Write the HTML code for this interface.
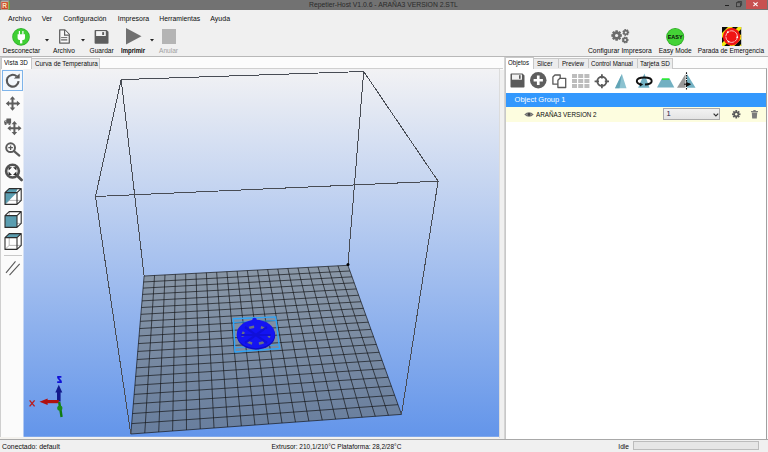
<!DOCTYPE html>
<html><head><meta charset="utf-8">
<style>
html,body{margin:0;padding:0;}
body{width:768px;height:452px;position:relative;overflow:hidden;background:#f0f0f0;font-family:"Liberation Sans",sans-serif;color:#0c0c0c;}
.a{position:absolute;white-space:nowrap;line-height:1;}
.t7{font-size:7px;}
svg{position:absolute;overflow:visible;}
</style></head><body>
<!-- title bar -->
<div class="a" style="left:0;top:0;width:768px;height:10.4px;background:#727272;"></div>
<div class="a" style="left:309px;top:2px;font-size:6.8px;color:#2a2a2a;">Repetier-Host V1.0.6 - ARAÑA3 VERSION 2.STL</div>
<svg style="left:0;top:0" width="12" height="11">
 <rect x="1.5" y="0.6" width="7.5" height="1" fill="#b8b8c0"/>
 <rect x="8.2" y="1.4" width="1.8" height="8.2" fill="#6a9a3a"/>
 <rect x="0.8" y="1.6" width="7.6" height="8" fill="#e0c8b0"/>
 <rect x="1.3" y="2.1" width="6.6" height="7" fill="#cc4828"/>
 <text x="2.3" y="8.2" font-size="6.6" font-weight="bold" fill="#f8e4c0" font-family="Liberation Sans">R</text>
</svg>
<div class="a" style="left:725px;top:5px;width:4px;height:1px;background:#222;"></div>
<svg style="left:736px;top:1.3px" width="7" height="6"><path d="M1.8,1.6 V0.5 H5.6 V4.3 H4.6" fill="none" stroke="#333" stroke-width="0.8"/><rect x="0.5" y="1.7" width="4" height="4" fill="none" stroke="#333" stroke-width="0.8"/></svg>
<div class="a" style="left:745.5px;top:0;width:21.5px;height:8.8px;background:#c75050;"></div>
<svg style="left:753.3px;top:1.6px" width="6" height="5"><path d="M0.4,0.4 L4.6,4.2 M4.6,0.4 L0.4,4.2" stroke="#fff" stroke-width="1.1"/></svg>

<!-- menu -->
<div class="a t7" style="left:8px;top:15px;">Archivo</div>
<div class="a t7" style="left:41.7px;top:15px;">Ver</div>
<div class="a t7" style="left:63.3px;top:15px;">Configuración</div>
<div class="a t7" style="left:117.7px;top:15px;">Impresora</div>
<div class="a" style="left:159.3px;top:15.5px;font-size:6.8px;">Herramientas</div>
<div class="a t7" style="left:210.3px;top:15px;">Ayuda</div>

<!-- toolbar -->
<svg style="left:12px;top:27.5px" width="18" height="18" viewBox="0 0 18 18">
 <circle cx="9" cy="8.9" r="8.8" fill="#2eb02a"/>
 <circle cx="9" cy="8.9" r="8" fill="#3fcf34"/>
 <path d="M7.4,3 V6.8 M10.9,3 V6.8" stroke="#fff" stroke-width="1.2"/>
 <path d="M5.6,6.3 H13 V10 Q13,11.8 11.2,12 H7.4 Q5.6,11.8 5.6,10z" fill="#fff"/>
 <rect x="8" y="11.5" width="2.3" height="3.9" fill="#fff"/>
</svg>
<div class="a" style="left:2.7px;top:47.6px;font-size:6.7px;">Desconectar</div>
<svg style="left:44.8px;top:39px" width="4" height="3"><path d="M0,0h4l-2,2.5z" fill="#222"/></svg>
<svg style="left:58px;top:28px" width="13" height="17" viewBox="0 0 13 17">
 <path d="M1.7,1.9 H6.9 L11.3,6.4 V15.1 H1.7z" fill="#f8f8f8" stroke="#626262" stroke-width="1.3" stroke-linejoin="round"/>
 <path d="M6.6,1.9 V7.2 H11.3" fill="#fff" stroke="#626262" stroke-width="1.2"/>
 <path d="M3.1,9.5 H9.3" stroke="#5a5a5a" stroke-width="0.8"/>
 <rect x="3.1" y="10.9" width="6.2" height="1.8" fill="#8a8a8a"/>
</svg>
<div class="a" style="left:53px;top:47.6px;font-size:6.6px;">Archivo</div>
<svg style="left:80.7px;top:39px" width="4" height="3"><path d="M0,0h4l-2,2.5z" fill="#222"/></svg>
<svg style="left:94px;top:29px" width="16" height="16" viewBox="0 0 16 16">
 <path d="M0.6,1.8 Q0.6,0.9 1.5,0.9 H12.6 L14.5,2.8 V14 Q14.5,14.8 13.7,14.8 H1.4 Q0.6,14.8 0.6,14z" fill="#5e5e5e"/>
 <rect x="2.1" y="2.1" width="9.7" height="4.9" fill="#f4f4f4"/>
 <rect x="8.2" y="3.1" width="1.9" height="2.9" fill="#5e5e5e"/>
</svg>
<div class="a" style="left:89.5px;top:47.6px;font-size:6.6px;">Guardar</div>
<svg style="left:125.5px;top:28px" width="16" height="17"><path d="M0,0 L15.5,8.2 L0,16.5z" fill="#707070"/></svg>
<div class="a" style="left:121px;top:47.6px;font-size:6.6px;font-weight:bold;transform:scaleX(0.91);transform-origin:0 0;">Imprimir</div>
<svg style="left:150.2px;top:39px" width="4" height="3"><path d="M0,0h4l-2,2.5z" fill="#222"/></svg>
<div class="a" style="left:161.5px;top:29.3px;width:14.6px;height:14.6px;background:#b4b4b4;"></div>
<div class="a" style="left:159px;top:47.6px;font-size:6.6px;color:#a0a0a0;">Anular</div>

<!-- right toolbar -->
<svg style="left:609px;top:28px" width="22" height="17" viewBox="0 0 22 17"><polygon points="11.23,6.08 12.87,6.34 12.87,8.66 11.23,8.92 11.17,9.06 12.15,10.41 10.51,12.05 9.16,11.07 9.02,11.13 8.76,12.77 6.44,12.77 6.18,11.13 6.04,11.07 4.69,12.05 3.05,10.41 4.03,9.06 3.97,8.92 2.33,8.66 2.33,6.34 3.97,6.08 4.03,5.94 3.05,4.59 4.69,2.95 6.04,3.93 6.18,3.87 6.44,2.23 8.76,2.23 9.02,3.87 9.16,3.93 10.51,2.95 12.15,4.59 11.17,5.94" fill="#6c6c6c"/><circle cx="7.6" cy="7.5" r="1.6" fill="#f0f0f0"/><polygon points="19.08,3.37 20.19,3.54 20.19,5.26 19.08,5.43 19.03,5.53 19.58,6.52 18.25,7.59 17.41,6.82 17.30,6.85 16.88,7.90 15.21,7.52 15.29,6.39 15.20,6.32 14.11,6.64 13.37,5.10 14.30,4.46 14.30,4.34 13.37,3.70 14.11,2.16 15.20,2.48 15.29,2.41 15.21,1.28 16.88,0.90 17.30,1.95 17.41,1.98 18.25,1.21 19.58,2.28 19.03,3.27" fill="#6c6c6c"/><circle cx="16.8" cy="4.4" r="1.0" fill="#f0f0f0"/><polygon points="18.48,10.97 19.59,11.14 19.59,12.86 18.48,13.03 18.43,13.13 18.98,14.12 17.65,15.19 16.81,14.42 16.70,14.45 16.28,15.50 14.61,15.12 14.69,13.99 14.60,13.92 13.51,14.24 12.77,12.70 13.70,12.06 13.70,11.94 12.77,11.30 13.51,9.76 14.60,10.08 14.69,10.01 14.61,8.88 16.28,8.50 16.70,9.55 16.81,9.58 17.65,8.81 18.98,9.88 18.43,10.87" fill="#6c6c6c"/><circle cx="16.2" cy="12" r="1.0" fill="#f0f0f0"/></svg>
<div class="a" style="left:588px;top:47.6px;font-size:6.75px;">Configurar Impresora</div>
<svg style="left:666px;top:27.5px" width="19" height="18" viewBox="0 0 19 18">
 <ellipse cx="9.2" cy="9" rx="9" ry="8.9" fill="#28a820"/>
 <ellipse cx="9.2" cy="9" rx="8.3" ry="8.2" fill="#44d236"/>
 <text x="9.2" y="11.3" text-anchor="middle" font-size="6.2" font-weight="bold" fill="#0a0a0a" font-family="Liberation Sans" textLength="15" lengthAdjust="spacingAndGlyphs">EASY</text>
</svg>
<div class="a" style="left:658.7px;top:47.6px;font-size:6.6px;">Easy Mode</div>
<svg style="left:721.8px;top:26.9px" width="19.2" height="19" viewBox="0 0 19.2 19">
 <rect x="0" y="0" width="19.2" height="19" fill="#0a0a0a"/>
 <path d="M0,6 L6,0 H11 L0,11z M0,16 L16,0 H19.2 V2 L2.2,19 H0z M19.2,7 V12 L12.2,19 H7.2z M19.2,17 V19 H17.2z" fill="#f2ea10"/>
 <circle cx="9.6" cy="9.6" r="8.8" fill="#f01414"/>
 <circle cx="9.6" cy="9.6" r="5.8" fill="none" stroke="#ffe0e0" stroke-width="0.8" stroke-dasharray="5.5,0.6"/>
 <circle cx="5.8" cy="5.2" r="0.9" fill="#fff"/><circle cx="15.3" cy="10.2" r="0.9" fill="#fff"/><circle cx="6.5" cy="14.6" r="0.9" fill="#fff"/>
</svg>
<div class="a" style="left:697.7px;top:47.6px;font-size:6.5px;">Parada de Emergencia</div>

<!-- separator line below toolbar -->
<div class="a" style="left:0;top:56.5px;width:768px;height:13px;background:#fcfcfc;"></div>
<div class="a" style="left:0;top:55.8px;width:768px;height:1px;background:#b8b8b8;"></div>

<!-- left tabs -->
<div class="a" style="left:0;top:68px;width:503px;height:1px;background:#d0d0d0;"></div>
<div class="a" style="left:1px;top:56.5px;width:31px;height:12px;background:#fff;border:1px solid #c8c8c8;border-bottom:none;box-sizing:border-box;"></div>
<div class="a" style="left:4.3px;top:59.3px;font-size:7.2px;transform:scaleX(0.88);transform-origin:0 0;">Vista 3D</div>
<div class="a" style="left:32.3px;top:58px;width:68px;height:10.5px;background:#ececec;border:1px solid #c8c8c8;border-left:none;border-bottom:none;box-sizing:border-box;"></div>
<div class="a" style="left:34.5px;top:59.7px;font-size:7.2px;transform:scaleX(0.88);transform-origin:0 0;">Curva de Temperatura</div>

<!-- left toolbar area -->
<div class="a" style="left:0;top:69px;width:23.5px;height:368px;background:#fbfbfb;"></div>
<div class="a" style="left:0;top:56.5px;width:1px;height:382px;background:#cfcfcf;"></div>
<div class="a" style="left:2.3px;top:70.2px;width:20.5px;height:21.1px;border:1px solid #7eb4ea;box-sizing:border-box;background:#f4f8fc;"></div>
<!-- rotate -->
<svg style="left:0;top:66px" width="24" height="26" viewBox="0 0 24 26">
 <path d="M18.58,15.21 A5.9,5.9 0 1 1 16.6,10.3" fill="none" stroke="#585858" stroke-width="2.1"/>
 <path d="M13.9,12.5 H19.7 V7.6z" fill="#585858"/>
</svg>
<!-- move -->
<svg style="left:0;top:90px" width="24" height="24" viewBox="0 0 24 24">
 <path d="M12.5,9 V18 M8,13.5 H17" stroke="#5e5e5e" stroke-width="2"/>
 <path d="M12.5,6.3 L9.7,9.6 H15.3z M12.5,20.8 L9.7,17.4 H15.3z M5.8,13.5 L9.1,10.7 V16.3z M20.2,13.5 L16.9,10.7 V16.3z" fill="#5e5e5e"/>
</svg>
<!-- move object -->
<svg style="left:0;top:114px" width="24" height="24" viewBox="0 0 24 24">
 <path d="M14.4,9.5 V19 M9.8,14.2 H19.2" stroke="#5e5e5e" stroke-width="2"/>
 <path d="M14.4,7.1 L11.6,10.3 H17.2z M14.4,21.3 L11.6,18.1 H17.2z M7.4,14.2 L10.6,11.4 V17z M21.5,14.2 L18.3,11.4 V17z" fill="#5e5e5e"/>
 <path d="M6.4,4.4 H10.7 Q11.1,4.4 11.1,4.8 V9.4 H6.4z" fill="#5e5e5e"/>
 <path d="M4.2,7.2 L5.2,5.9 H6.6 V9.4 H4.2z" fill="#5e5e5e"/>
 <rect x="4.9" y="6.5" width="1.1" height="1.1" fill="#e8e8e8"/>
 <circle cx="5.6" cy="10" r="1.1" fill="#5e5e5e"/>
 <circle cx="9.4" cy="10" r="1.1" fill="#5e5e5e"/>
</svg>
<!-- zoom -->
<svg style="left:5px;top:142px" width="16" height="15" viewBox="0 0 16 15">
 <circle cx="5.6" cy="5.7" r="4.4" fill="none" stroke="#5a5a5a" stroke-width="2"/>
 <path d="M9,9.2 L14.3,13.6" stroke="#5a5a5a" stroke-width="2.2" stroke-linecap="round"/>
 <path d="M5.6,3.4 V8 M3.3,5.7 H7.9" stroke="#5a5a5a" stroke-width="1.3"/>
</svg>
<!-- zoom fit -->
<svg style="left:3.5px;top:162.6px" width="19" height="19" viewBox="0 0 19 19">
 <circle cx="8.5" cy="8.1" r="6.4" fill="none" stroke="#525252" stroke-width="2.6"/>
 <path d="M13,12.5 L17.6,16.9" stroke="#525252" stroke-width="2.8" stroke-linecap="round"/>
 <path d="M4.6,4.2 H8 L4.6,7.6z M12.4,4.2 H9 L12.4,7.6z M4.6,12 H8 L4.6,8.6z M12.4,12 H9 L12.4,8.6z" fill="#2a2a2a"/>
</svg>
<!-- cubes -->
<svg style="left:3.5px;top:187.5px" width="19" height="18" viewBox="0 0 19 18">
<path d="M1.0,4.6 L5.2,0.5999999999999996 H17.2 V12.399999999999999 L13.0,16.4 H1.0z" fill="#fff"/>
<path d="M5.2,0.5999999999999996 V12.399999999999999 H17.2 M1.0,16.4 L5.2,12.399999999999999" fill="none" stroke="#9a9a9a" stroke-width="0.7"/>
<path d="M1.0,4.6 H13.0 L1.0,16.4z" fill="#5a9db0"/>
<path d="M1.0,4.6 L5.2,0.5999999999999996 H13.7 L12.0,4.6z" fill="#5a9db0"/>
<path d="M1.0,4.6 L5.2,0.5999999999999996 H17.2 V12.399999999999999 L13.0,16.4 H1.0z M1.0,4.6 H13.0 V16.4 M13.0,4.6 L17.2,0.5999999999999996" fill="none" stroke="#2e2e2e" stroke-width="1.1" stroke-linejoin="round"/>
</svg>
<svg style="left:3.5px;top:210.5px" width="19" height="18" viewBox="0 0 19 18">
<path d="M1.0,4.6 L5.2,0.5999999999999996 H17.2 V12.399999999999999 L13.0,16.4 H1.0z" fill="#fff"/>
<path d="M5.2,0.5999999999999996 V12.399999999999999 H17.2 M1.0,16.4 L5.2,12.399999999999999" fill="none" stroke="#9a9a9a" stroke-width="0.7"/>
<rect x="1.0" y="4.6" width="12.0" height="11.799999999999999" fill="#5a9db0"/>
<path d="M1.0,4.6 L5.2,0.5999999999999996 H17.2 V12.399999999999999 L13.0,16.4 H1.0z M1.0,4.6 H13.0 V16.4 M13.0,4.6 L17.2,0.5999999999999996" fill="none" stroke="#2e2e2e" stroke-width="1.1" stroke-linejoin="round"/>
</svg>
<svg style="left:3.5px;top:233px" width="19" height="18" viewBox="0 0 19 18">
<path d="M1.0,4.6 L5.2,0.5999999999999996 H17.2 V12.399999999999999 L13.0,16.4 H1.0z" fill="#fff"/>
<path d="M5.2,0.5999999999999996 V12.399999999999999 H17.2 M1.0,16.4 L5.2,12.399999999999999" fill="none" stroke="#9a9a9a" stroke-width="0.7"/>
<path d="M1.0,4.6 L5.2,0.5999999999999996 H17.2 L13.0,4.6z" fill="#5a9db0"/>
<path d="M1.0,4.6 L5.2,0.5999999999999996 H17.2 V12.399999999999999 L13.0,16.4 H1.0z M1.0,4.6 H13.0 V16.4 M13.0,4.6 L17.2,0.5999999999999996" fill="none" stroke="#2e2e2e" stroke-width="1.1" stroke-linejoin="round"/>
</svg>
<div class="a" style="left:3.5px;top:255px;width:18px;height:1px;background:#c8c8c8;"></div>
<svg style="left:0;top:255px" width="24" height="24"><path d="M6,17.8 L15.5,6.4 M9.5,20.2 L19.7,8.8" stroke="#5a5a5a" stroke-width="1.1"/></svg>

<!-- 3D viewport -->
<svg style="left:0;top:0" width="768" height="452">
 <defs>
  <linearGradient id="bg" gradientUnits="userSpaceOnUse" x1="0" y1="69" x2="0" y2="436.8">
   <stop offset="0" stop-color="#f2f2f4"/>
   <stop offset="1" stop-color="#6395ea"/>
  </linearGradient>
 <linearGradient id="bed" gradientUnits="userSpaceOnUse" x1="0" y1="265" x2="0" y2="434">
   <stop offset="0" stop-color="#8a97a6"/>
   <stop offset="1" stop-color="#687e9e"/>
  </linearGradient>
 </defs>
 <rect x="23.5" y="69" width="475.5" height="367.8" fill="url(#bg)"/>
 <polygon points="144.1,276.0 347.9,265.3 401.5,414.4 130.8,434.0" fill="url(#bed)"/>
 <g stroke="#15171a" stroke-width="0.7">
<line x1="144.10" y1="276.00" x2="130.80" y2="434.00"/>
<line x1="144.10" y1="276.00" x2="347.90" y2="265.30"/>
<line x1="154.55" y1="275.45" x2="144.79" y2="432.99"/>
<line x1="143.60" y1="281.98" x2="349.95" y2="270.99"/>
<line x1="164.97" y1="274.90" x2="158.73" y2="431.98"/>
<line x1="143.08" y1="288.12" x2="352.04" y2="276.83"/>
<line x1="175.36" y1="274.36" x2="172.62" y2="430.97"/>
<line x1="142.55" y1="294.42" x2="354.20" y2="282.81"/>
<line x1="185.72" y1="273.81" x2="186.47" y2="429.97"/>
<line x1="142.01" y1="300.88" x2="356.40" y2="288.95"/>
<line x1="196.06" y1="273.27" x2="200.26" y2="428.97"/>
<line x1="141.45" y1="307.52" x2="358.67" y2="295.25"/>
<line x1="206.37" y1="272.73" x2="214.00" y2="427.98"/>
<line x1="140.87" y1="314.34" x2="360.99" y2="301.72"/>
<line x1="216.65" y1="272.19" x2="227.70" y2="426.98"/>
<line x1="140.28" y1="321.35" x2="363.38" y2="308.36"/>
<line x1="226.90" y1="271.65" x2="241.35" y2="426.00"/>
<line x1="139.68" y1="328.55" x2="365.83" y2="315.18"/>
<line x1="237.13" y1="271.12" x2="254.95" y2="425.01"/>
<line x1="139.05" y1="335.97" x2="368.35" y2="322.19"/>
<line x1="247.33" y1="270.58" x2="268.51" y2="424.03"/>
<line x1="138.41" y1="343.59" x2="370.94" y2="329.40"/>
<line x1="257.51" y1="270.05" x2="282.02" y2="423.05"/>
<line x1="137.75" y1="351.44" x2="373.61" y2="336.81"/>
<line x1="267.66" y1="269.51" x2="295.48" y2="422.08"/>
<line x1="137.07" y1="359.52" x2="376.35" y2="344.44"/>
<line x1="277.78" y1="268.98" x2="308.89" y2="421.11"/>
<line x1="136.37" y1="367.85" x2="379.17" y2="352.29"/>
<line x1="287.87" y1="268.45" x2="322.26" y2="420.14"/>
<line x1="135.65" y1="376.43" x2="382.08" y2="360.37"/>
<line x1="297.94" y1="267.92" x2="335.58" y2="419.17"/>
<line x1="134.90" y1="385.28" x2="385.07" y2="368.70"/>
<line x1="307.99" y1="267.40" x2="348.85" y2="418.21"/>
<line x1="134.13" y1="394.41" x2="388.16" y2="377.28"/>
<line x1="318.00" y1="266.87" x2="362.08" y2="417.25"/>
<line x1="133.34" y1="403.83" x2="391.34" y2="386.13"/>
<line x1="327.99" y1="266.35" x2="375.27" y2="416.30"/>
<line x1="132.52" y1="413.56" x2="394.62" y2="395.25"/>
<line x1="337.96" y1="265.82" x2="388.41" y2="415.35"/>
<line x1="131.67" y1="423.61" x2="398.00" y2="404.67"/>
<line x1="347.90" y1="265.30" x2="401.50" y2="414.40"/>
<line x1="130.80" y1="434.00" x2="401.50" y2="414.40"/>
 </g>
 <g stroke="#484c54" stroke-width="1" fill="none" shape-rendering="crispEdges">
<line x1="121.2" y1="79.6" x2="363.7" y2="71.5"/>
<line x1="363.7" y1="71.5" x2="438.1" y2="181.2"/>
<line x1="438.1" y1="181.2" x2="95.5" y2="196.5"/>
<line x1="95.5" y1="196.5" x2="121.2" y2="79.6"/>
<line x1="121.2" y1="79.6" x2="144.1" y2="276.0"/>
<line x1="363.7" y1="71.5" x2="347.9" y2="265.3"/>
<line x1="95.5" y1="196.5" x2="130.8" y2="434.0"/>
<line x1="438.1" y1="181.2" x2="401.5" y2="414.4"/>
 </g>
 <circle cx="348" cy="264.6" r="1.5" fill="#000"/>
 <!-- object -->
 <g fill="none" stroke="#2ea4f8" stroke-width="1.4">
  <polygon points="233.4,318.8 275.7,316.9 279.6,348.5 234.9,351.9"/>
  <line x1="234" y1="322.5" x2="276" y2="320.5" stroke-width="0.9"/>
  <line x1="235" y1="347.8" x2="279" y2="344.8" stroke-width="0.9"/>
 </g>
 <ellipse cx="256" cy="335.5" rx="19.2" ry="14.2" fill="#0c0cc4"/>
 <ellipse cx="255.8" cy="334" rx="19" ry="14.2" fill="#1414f2"/>
 <circle cx="254.5" cy="320.2" r="2.4" fill="#1414f2"/>
 <ellipse cx="256" cy="335.2" rx="13.2" ry="8.6" fill="none" stroke="#6a7284" stroke-width="2.5" stroke-dasharray="5 6.8" stroke-dashoffset="2.5"/>
 <g stroke="#1010d8" stroke-width="2.2">
  <path d="M245,327 L267,343 M267,327 L245,343 M241,335 H271"/>
 </g>
 <!-- axes -->
 <path d="M58.8,401.5 V391" stroke="#141a8c" stroke-width="3.6"/>
 <path d="M58.8,384.8 L55.3,392.5 H62.3z" fill="#141a8c"/>
 <path d="M57.2,376.8 H61.4 M57.6,377.2 L61.2,381.6 M57.2,382.1 H61.8" fill="none" stroke="#1010d8" stroke-width="1.7"/>
 <path d="M58.8,401.6 H46" stroke="#b01010" stroke-width="3.2"/>
 <path d="M39.5,401.8 L47.6,398.6 V405z" fill="#b01010"/>
 <path d="M29.6,400.4 L34.6,406.4 M34.6,400.4 L29.6,406.4" stroke="#b82020" stroke-width="1.4"/>
 <path d="M59.2,402 L61.6,417" stroke="#107c10" stroke-width="2.4"/>
 <circle cx="59.8" cy="408" r="2.6" fill="#1a8a1a"/>
</svg>
<div class="a" style="left:499px;top:69px;width:1.2px;height:369px;background:#dcdcdc;"></div>

<!-- right panel -->
<div class="a" style="left:503.5px;top:56.5px;width:1px;height:382px;background:#d4d4d4;"></div>
<div class="a" style="left:766px;top:56.5px;width:2px;height:382px;background:#fafafa;"></div>
<div class="a" style="left:505px;top:68px;width:262px;height:370.5px;background:#fff;border:1px solid #c8c8c8;border-right:1px solid #a0a0a0;border-bottom:none;box-sizing:border-box;"></div>
<div class="a" style="left:505px;top:56.8px;width:29.3px;height:12px;background:#fff;border:1px solid #c8c8c8;border-bottom:none;box-sizing:border-box;"></div>
<div class="a" style="left:508.2px;top:59.3px;font-size:7.2px;transform:scaleX(0.85);transform-origin:0 0;">Objetos</div>
<div class="a" style="left:534.3px;top:58px;width:138.5px;height:10.5px;background:#ececec;border:1px solid #c8c8c8;border-left:none;border-bottom:none;box-sizing:border-box;"></div>
<div class="a" style="left:558px;top:58px;width:1px;height:10px;background:#c8c8c8;"></div>
<div class="a" style="left:587.5px;top:58px;width:1px;height:10px;background:#c8c8c8;"></div>
<div class="a" style="left:636.5px;top:58px;width:1px;height:10px;background:#c8c8c8;"></div>
<div class="a" style="left:536.5px;top:59.7px;font-size:7.2px;transform:scaleX(0.86);transform-origin:0 0;">Slicer</div>
<div class="a" style="left:561.6px;top:59.7px;font-size:7.2px;transform:scaleX(0.855);transform-origin:0 0;">Preview</div>
<div class="a" style="left:590.8px;top:59.7px;font-size:7.2px;transform:scaleX(0.86);transform-origin:0 0;">Control Manual</div>
<div class="a" style="left:639.9px;top:59.7px;font-size:7.2px;transform:scaleX(0.89);transform-origin:0 0;">Tarjeta SD</div>

<!-- right icons -->
<svg style="left:509.5px;top:73.2px" width="15" height="15" viewBox="0 0 15 15">
 <path d="M0.5,1.3 q0,-0.8 0.8,-0.8 h11.2 l2,2 v11.2 q0,0.8 -0.8,0.8 h-12.4 q-0.8,0 -0.8,-0.8z" fill="#5a5a5a"/>
 <rect x="2" y="1.5" width="10" height="5.2" fill="#f2f2f2"/>
 <rect x="9" y="2.2" width="1.6" height="3.6" fill="#5a5a5a"/>
</svg>
<svg style="left:530px;top:72.3px" width="16.5" height="16.5" viewBox="0 0 16 16">
 <circle cx="8" cy="8" r="8" fill="#5e5e5e"/>
 <path d="M8,3.5 V12.5 M3.5,8 H12.5" stroke="#fff" stroke-width="2.6"/>
</svg>
<svg style="left:552px;top:74px" width="15" height="15" viewBox="0 0 15 15">
 <path d="M0.9,3 L2.9,1 H8.2 V10.2 H0.9z" fill="#fff" stroke="#5a5a5a" stroke-width="1.3" stroke-linejoin="round"/>
 <path d="M5.9,6.3 L7.9,4.3 H13.7 V13.5 H5.9z" fill="#fff" stroke="#5a5a5a" stroke-width="1.3" stroke-linejoin="round"/>
</svg>
<svg style="left:572px;top:74px" width="17.5" height="14" viewBox="0 0 17.5 14">
 <g fill="#bdbdbd">
  <rect x="0" y="0" width="5" height="4"/><rect x="6.2" y="0" width="5" height="4"/><rect x="12.4" y="0" width="5" height="4"/>
  <rect x="0" y="5" width="5" height="4"/><rect x="6.2" y="5" width="5" height="4"/><rect x="12.4" y="5" width="5" height="4"/>
  <rect x="0" y="10" width="5" height="4"/><rect x="6.2" y="10" width="5" height="4"/><rect x="12.4" y="10" width="5" height="4"/>
 </g>
</svg>
<svg style="left:594px;top:73.5px" width="15" height="15" viewBox="0 0 15 15">
 <circle cx="7.9" cy="7.3" r="4.6" fill="none" stroke="#5a5a5a" stroke-width="1.9"/>
 <path d="M7.9,0.3 V4.6 M7.9,10 V14.3 M0.6,7.3 H5 M10.8,7.3 H15" stroke="#5a5a5a" stroke-width="1.8"/>
</svg>
<svg style="left:614.8px;top:73.5px" width="12" height="14.5" viewBox="0 0 12 14.5">
 <path d="M6.9,0 L11.5,14.3 H0z" fill="#8cc2d0"/>
 <path d="M6.9,0 L4.5,14.3 H0z" fill="#62a4b6"/>
</svg>
<svg style="left:636.3px;top:72px" width="16.5" height="17" viewBox="0 0 16.5 17">
 <path d="M8.4,1.6 L13.5,15.8 H2.1z" fill="#72b0c2"/>
 <path d="M5,12.5 Q0.8,11.6 0.8,9 Q0.8,5.5 8.25,5.5 Q15.7,5.5 15.7,9 Q15.7,12.4 9,12.5" fill="none" stroke="#111" stroke-width="1.9"/>
 <path d="M3.8,10.6 L7.2,12.5 L4,14.6z" fill="#111"/>
</svg>
<svg style="left:656.6px;top:78.4px" width="17.5" height="10" viewBox="0 0 17.5 10">
 <path d="M4.7,0.8 H12.7 L17.3,9.4 H0z" fill="#72b0c2"/>
 <path d="M5,1.1 H12.4" stroke="#22f022" stroke-width="1.5"/>
</svg>
<svg style="left:677px;top:72px" width="19" height="19" viewBox="0 0 19 19">
 <path d="M8.5,2 V15.8 H0z" fill="#989898"/>
 <path d="M10,2 L18.5,15.8 H10z" fill="#72b0c2"/>
 <path d="M9.5,0.3 V18" stroke="#111" stroke-width="1.1" stroke-dasharray="1.6,1"/>
 <path d="M7,12.2 L13.2,12.3 M9.5,10.6 L13.4,12.3 L9.5,14z" stroke="#111" stroke-width="1" fill="#111"/>
</svg>

<!-- object list -->
<div class="a" style="left:506px;top:92.6px;width:260px;height:14px;background:#3398fd;"></div>
<div class="a" style="left:514.6px;top:95.5px;font-size:7.5px;color:#fff;">Object Group 1</div>
<div class="a" style="left:506px;top:106.6px;width:260px;height:15px;background:#fdfddf;"></div>
<svg style="left:523.5px;top:111px" width="10" height="7" viewBox="0 0 10 7">
 <path d="M0.3,3.5 Q5,-1.2 9.7,3.5 Q5,8.2 0.3,3.5z" fill="#6e6e6e"/>
 <path d="M1.8,3.5 Q5,1.3 8.2,3.5 Q5,5.7 1.8,3.5z" fill="#a8a8a0"/>
 <circle cx="5" cy="3.5" r="1.4" fill="#444"/>
</svg>
<div class="a" style="left:536px;top:110.6px;font-size:7.6px;transform:scaleX(0.83);transform-origin:0 0;">ARAÑA3 VERSION 2</div>
<div class="a" style="left:663.2px;top:108px;width:56.6px;height:11.7px;background:linear-gradient(#f2f2f2,#e4e4e4);border:1px solid #ababab;box-sizing:border-box;"></div>
<div class="a" style="left:666.5px;top:109.8px;font-size:7.6px;color:#2a1a40;">1</div>
<svg style="left:713px;top:112.5px" width="6" height="4"><path d="M0.6,0.6 L2.9,2.9 L5.2,0.6" fill="none" stroke="#333" stroke-width="1.2"/></svg>
<svg style="left:731.5px;top:110px" width="8.5" height="8.5" viewBox="0 0 8.5 8.5">
 <g transform="translate(4.25,4.25)" fill="#5c5c5c">
  <circle r="2.8"/>
  <rect x="-0.9" y="-4.2" width="1.8" height="8.4"/><rect x="-4.2" y="-0.9" width="8.4" height="1.8"/>
  <rect x="-0.9" y="-4.2" width="1.8" height="8.4" transform="rotate(45)"/><rect x="-0.9" y="-4.2" width="1.8" height="8.4" transform="rotate(-45)"/>
  <circle r="1.2" fill="#fdfddf"/>
 </g>
</svg>
<svg style="left:751px;top:110px" width="7" height="8.5" viewBox="0 0 7 8.5">
 <rect x="0" y="1" width="7" height="1.2" fill="#7c7c7c"/>
 <rect x="2.3" y="0" width="2.4" height="1.2" fill="#7c7c7c"/>
 <path d="M0.8,2.5 H6.2 L5.8,8.5 H1.2z" fill="#7c7c7c"/>
</svg>

<!-- status bar -->
<div class="a" style="left:0;top:436.5px;width:499px;height:2px;background:#f4f2ee;"></div>
<div class="a" style="left:0;top:439px;width:768px;height:13px;background:#f0f0f0;"></div>
<div class="a" style="left:0;top:438.5px;width:768px;height:1px;background:#a8a8a8;"></div>
<div class="a" style="left:2px;top:444px;font-size:6.9px;">Conectado: default</div>
<div class="a" style="left:271.5px;top:444px;font-size:6.5px;">Extrusor: 210,1/210°C Plataforma: 28,2/28°C</div>
<div class="a" style="left:618.3px;top:444px;font-size:6.6px;">Idle</div>
<div class="a" style="left:633.2px;top:441px;width:126px;height:9.4px;background:#e6e6e6;border:1px solid #bcbcbc;box-sizing:border-box;"></div>
</body></html>
